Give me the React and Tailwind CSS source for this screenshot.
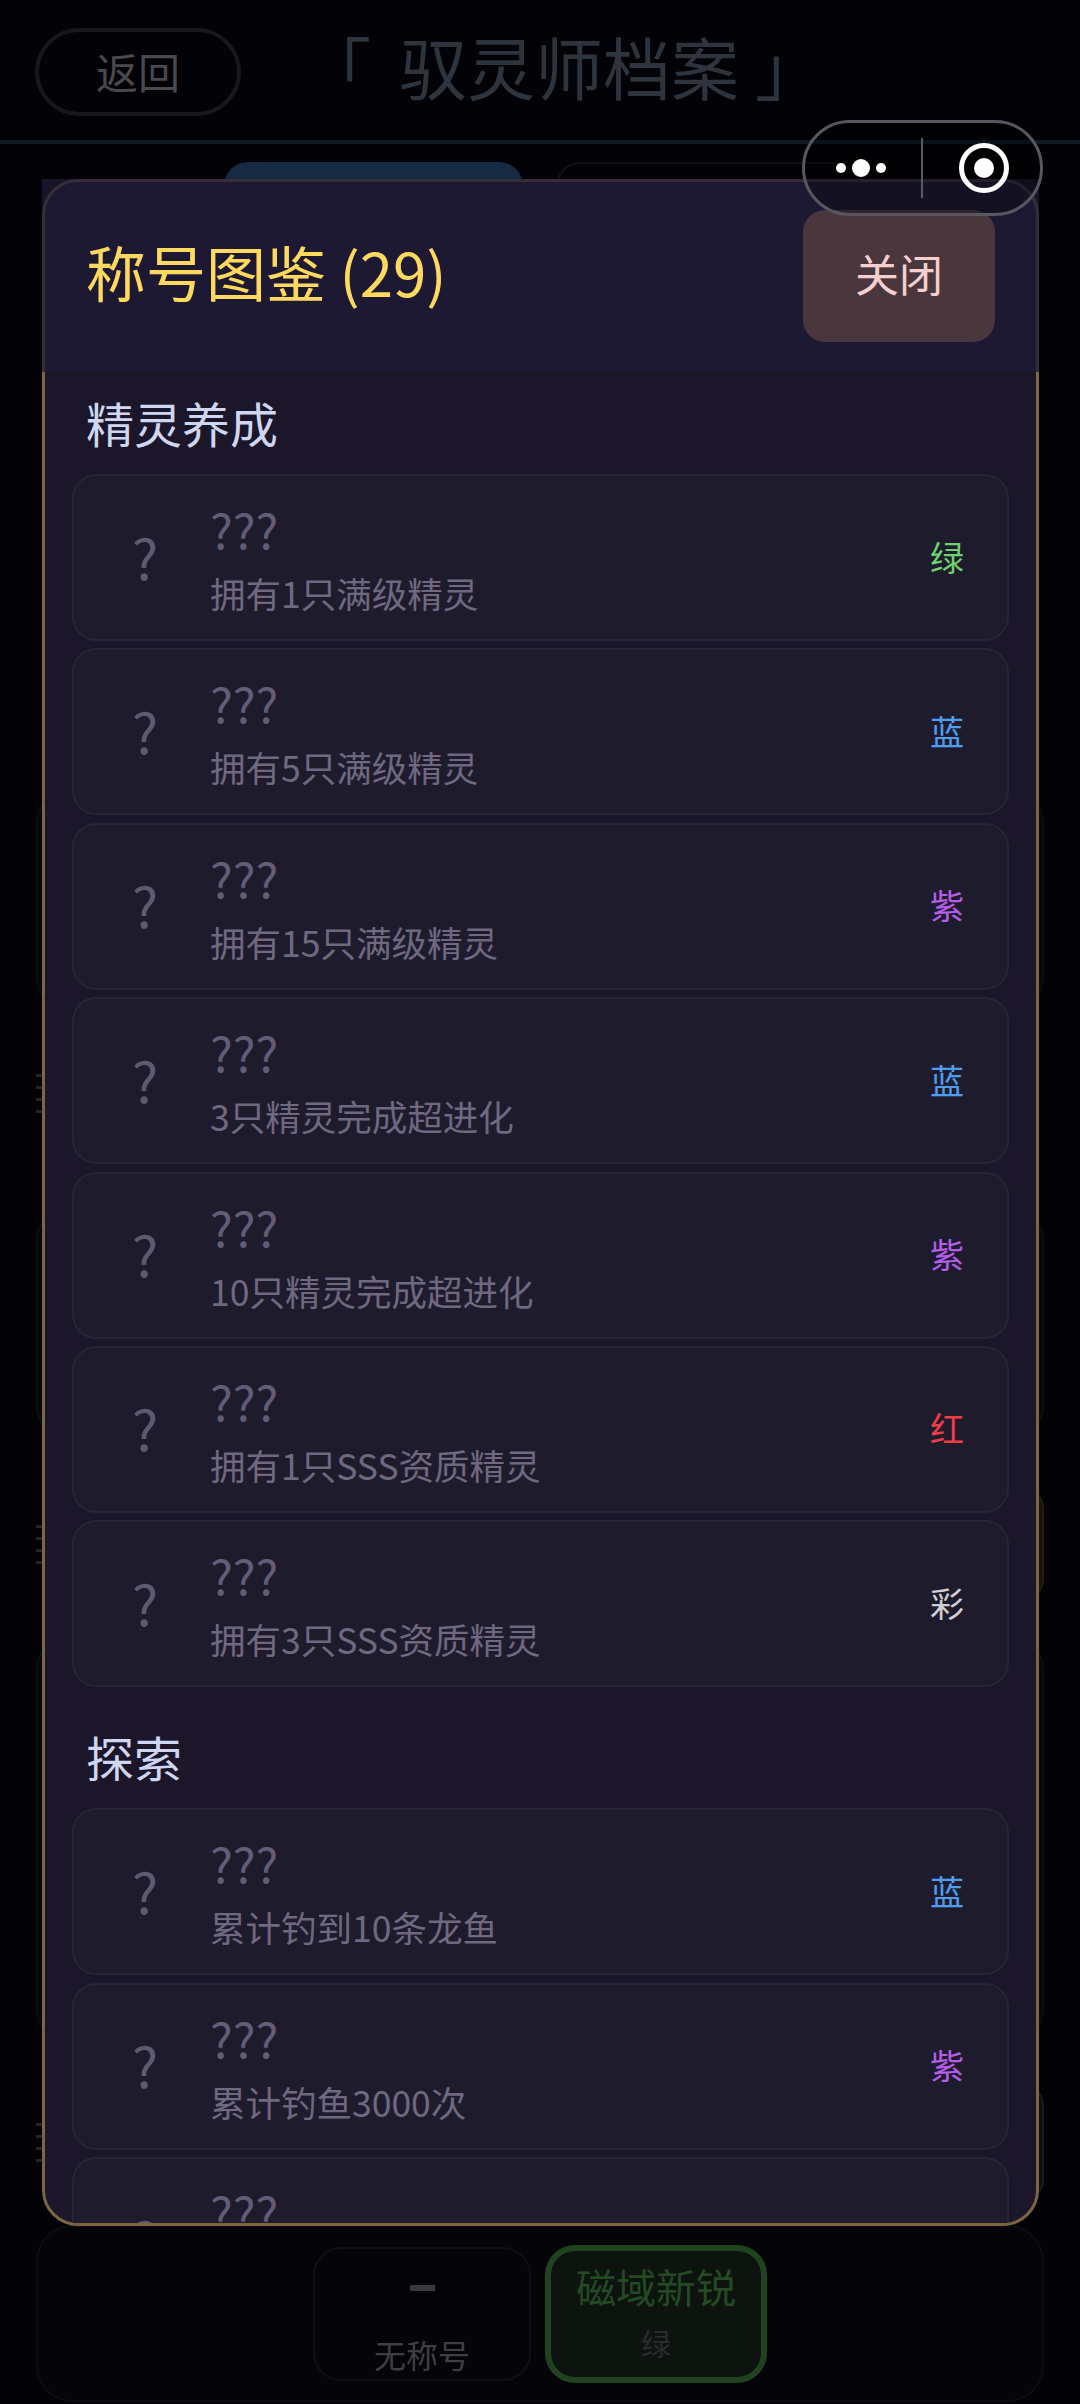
const font = { fontFamily: '"Noto Sans CJK SC", "Noto Sans", sans-serif' };

const rarity = {
  绿: 'text-[#6fd06f]',
  蓝: 'text-[#4f9df0]',
  紫: 'text-[#b45ee8]',
  红: 'text-[#f23d46]',
  彩: 'text-[#d0d0d4]',
};

const groupOne = [
  ['拥有1只满级精灵', '绿'],
  ['拥有5只满级精灵', '蓝'],
  ['拥有15只满级精灵', '紫'],
  ['3只精灵完成超进化', '蓝'],
  ['10只精灵完成超进化', '紫'],
  ['拥有1只SSS资质精灵', '红'],
  ['拥有3只SSS资质精灵', '彩'],
];

const groupTwo = [
  ['累计钓到10条龙鱼', '蓝'],
  ['累计钓鱼3000次', '紫'],
  ['累计钓鱼10000次', '彩'],
];

function TitleRow({ desc, tag }) {
  return (
    <div className="flex h-[167px] shrink-0 items-center rounded-[24px] border-2 border-[#282438] bg-[#1e1b2d] pl-[44px] pr-[43px]">
      <div className="mb-[4px] w-[54px] text-center text-[56px] leading-none text-[#5f5871]">?</div>
      <div className="ml-[38px] flex flex-1 flex-col">
        <div className="text-[48px] leading-[62px] text-[#635c76]">???</div>
        <div className="mt-[9px] text-[35.5px] leading-[50px] text-[#6f6880]">{desc}</div>
      </div>
      <div className={`mb-[2px] text-[34px] leading-none ${rarity[tag]}`}>{tag}</div>
    </div>
  );
}

function Section({ name, rows }) {
  return (
    <div className="flex flex-col">
      <div className="px-[14px] text-[48px] leading-[62px] text-[#cfd6f2]">{name}</div>
      <div className="mt-[21px] flex flex-col gap-[7.4px]">
        {rows.map(([desc, tag]) => (
          <TitleRow key={desc} desc={desc} tag={tag} />
        ))}
      </div>
    </div>
  );
}

// the bit of a section label that sticks out from behind the dialog
function LabelEdge() {
  return (
    <div className="flex w-[7px] flex-col gap-[9px]">
      <div className="h-[3px] bg-[#242426]" />
      <div className="h-[3px] bg-[#242426]" />
      <div className="h-[3px] bg-[#242426]" />
      <div className="h-[3px] bg-[#242426]" />
    </div>
  );
}

function BehindCard({ height }) {
  return <div style={{ height }} className="rounded-[32px] border-2 border-[#0c0c14] bg-[#040409]" />;
}

export default function App() {
  return (
    <div style={font} className="relative flex h-[2404px] w-[1080px] flex-col overflow-hidden bg-[#020207]">
      {/* page behind the dialog */}
      <div className="flex h-[144px] shrink-0 items-start border-b-4 border-[#0f1b24] pl-[35px] pt-[28px]">
        <div className="flex h-[88px] w-[206px] items-center justify-center rounded-[44px] border-4 border-[#17171e] pb-[4px] text-[42px] text-[#4a4a4e]">
          返回
        </div>
        <div className="-mt-[6px] ml-[62px] flex text-[68px] leading-[88px] text-[#2e343d]">
          <span className="mr-[28px]">「</span>
          <span>驭灵师档案</span>
          <span className="ml-[16px]">」</span>
        </div>
      </div>
      <div className="flex shrink-0 gap-[33px] pl-[224px] pt-[18px]">
        <div className="h-[60px] w-[299px] rounded-t-[24px] bg-[#162a42]" />
        <div className="h-[60px] w-[303px] rounded-t-[24px] border-2 border-[#101015]" />
      </div>
      <div className="mx-[36px] flex shrink-0 flex-col pt-[569px]">
        <BehindCard height={218} />
        <div className="mt-[62px] flex h-[44px] items-center"><LabelEdge /></div>
        <div className="mt-[93px]"><BehindCard height={230} /></div>
        <div className="mt-[50px] flex h-[112px] items-center justify-between">
          <LabelEdge />
          <div className="h-full w-[100px] rounded-[20px] border-2 border-[#241a0e] bg-[#18120b]" />
        </div>
        <div className="mt-[37px]"><BehindCard height={404} /></div>
        <div className="mt-[44px] flex h-[115px] items-center justify-between">
          <LabelEdge />
          <div className="h-full w-[100px] rounded-[20px] border-2 border-[#1a1a1e] bg-[#0e0e11]" />
        </div>
      </div>
      <div className="mx-[36px] mb-[2px] mt-auto flex h-[177px] shrink-0 justify-center gap-[14px] rounded-[36px] border-2 border-[#0b0b10] bg-[#040409] pt-[20px]">
        <div className="flex h-[134px] w-[218px] flex-col items-center rounded-[28px] border-2 border-[#0f0f16]">
          <div className="mt-[36px] h-[6px] w-[25px] shrink-0 bg-[#3a3a3e]" />
          <div className="mt-[45px] text-[32px] leading-[36px] text-[#3e3e44]">无称号</div>
        </div>
        <div className="-mt-[2px] flex h-[138px] w-[222px] flex-col items-center rounded-[30px] border-[6px] border-[#20421f] bg-[#0d130f]">
          <div className="mt-[5px] text-[40px] leading-[60px] text-[#234a23]">磁域新锐</div>
          <div className="mt-[4px] text-[30px] leading-[44px] text-[#2b2d2c]">绿</div>
        </div>
      </div>

      {/* dialog */}
      <div className="absolute left-[42px] top-[179px] h-[2047px] w-[997px]">
        <div className="flex h-full flex-col gap-[38px] overflow-hidden rounded-[36px] border-[3px] border-[#7d6540] bg-[#1b1629] px-[27px] pt-[209px]">
          <Section name="精灵养成" rows={groupOne} />
          <Section name="探索" rows={groupTwo} />
        </div>
        <div className="absolute inset-x-0 top-0 flex h-[193px] items-center justify-between bg-[#201b35]/75 pl-[44px] pr-[44px]">
          <div className="mb-[10px] text-[60px] leading-[84px] text-[#ffd95e]">称号图鉴 (29)</div>
          <div className="flex h-[132px] w-[192px] items-center justify-center rounded-[22px] bg-[#4a373e] pb-[6px] text-[44px] text-[#f5cfd0]">
            关闭
          </div>
        </div>
      </div>

      {/* wechat capsule */}
      <div className="absolute left-[802px] top-[120px] flex h-[96px] w-[241px] items-center rounded-[48px] border-[3px] border-[#58565f] bg-black/30">
        <div className="flex w-[112px] items-center justify-center gap-[6px]">
          <span className="h-[10px] w-[10px] rounded-full bg-white" />
          <span className="h-[18px] w-[18px] rounded-full bg-white" />
          <span className="h-[10px] w-[10px] rounded-full bg-white" />
        </div>
        <div className="ml-[4px] h-[60px] w-[2px] bg-[#5b5a60]" />
        <div className="ml-[36px] flex h-[50px] w-[50px] items-center justify-center rounded-full border-[5px] border-white">
          <span className="h-[20px] w-[20px] rounded-full bg-white" />
        </div>
      </div>
    </div>
  );
}
